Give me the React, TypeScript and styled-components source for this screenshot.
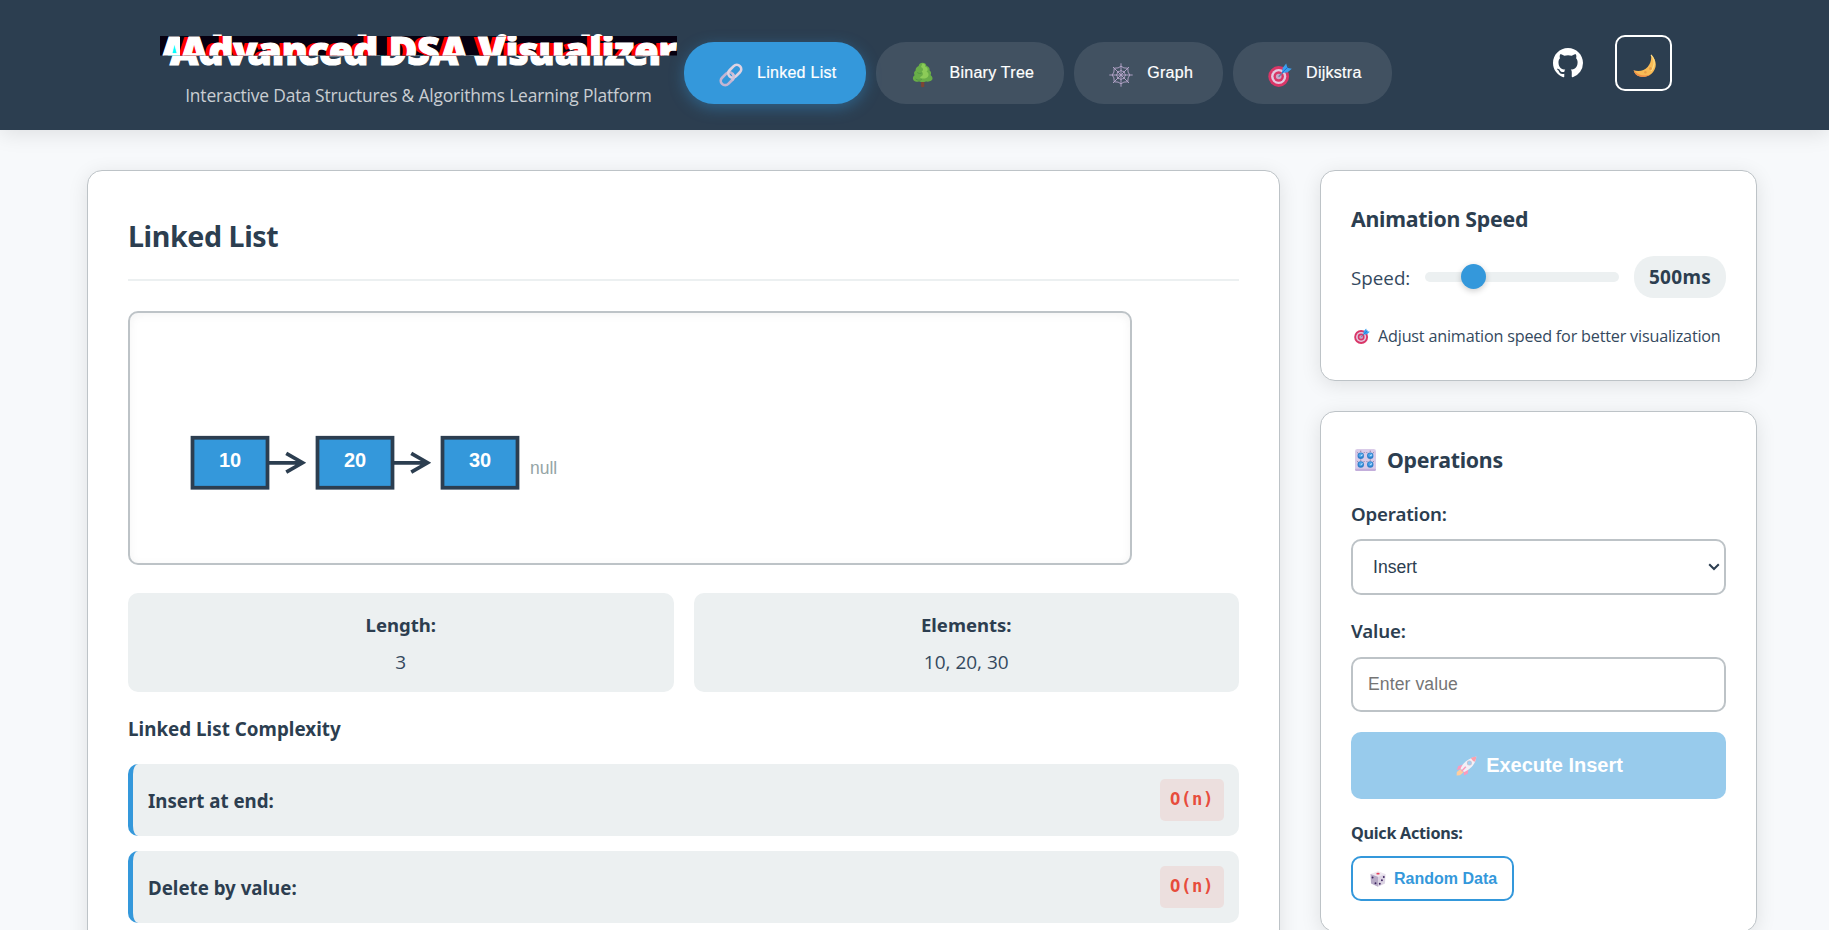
import React, { useState } from 'react';
import styled, { createGlobalStyle, css } from 'styled-components';

const INK = '#2c3e50';
const TEXT = '#34495e';
const BLUE = '#3498db';
const LINE = '#bdc3c7';
const SOFT = '#ecf0f1';
const UI = "'Noto Sans', 'Open Sans', sans-serif";
const LIGHT_UI = "'Open Sans', 'Noto Sans', sans-serif";
const CONTROL = "'Liberation Sans', Arial, sans-serif";

const GlobalStyle = createGlobalStyle`
  *, *::before, *::after { box-sizing: border-box; }
  body {
    margin: 0;
    overflow: hidden;
    background: #f7f9fb;
    color: ${INK};
    font-family: ${UI};
  }
  h1, h2, h3, h4, p { margin: 0; }
`;

const Page = styled.div`
  height: 100vh;
  min-width: 1829px;
  overflow: hidden;
`;

/* ---------- header ---------- */

const Header = styled.header`
  display: flex;
  align-items: flex-start;
  height: 130px;
  padding: 25px 157px 0 170px;
  background: ${INK};
  box-shadow: 0 4px 20px rgba(0, 0, 0, 0.1);
`;

const Brand = styled.div`
  width: 497px;
  text-align: center;
  white-space: nowrap;
`;

const glitchLayer = css`
  content: attr(data-text);
  position: absolute;
  top: 0;
  width: 100%;
  height: 100%;
  overflow: hidden;
  background: #060010;
  color: #fff;
  clip-path: inset(11px 0 19.6px 0);
`;

const GlitchTitle = styled.h1`
  position: relative;
  color: #fff;
  font-size: 39px;
  font-weight: 900;
  line-height: 50px;
  letter-spacing: 0.07px;
  -webkit-text-stroke: 1.2px #fff;
  &::before {
    ${glitchLayer}
    left: -10px;
    text-shadow: 5px 0 cyan;
  }
  &::after {
    ${glitchLayer}
    left: 10px;
    text-shadow: -5px 0 red;
  }
`;

const Tagline = styled.p`
  margin-top: 6px;
  color: rgba(255, 255, 255, 0.75);
  font-family: ${LIGHT_UI};
  font-size: 17.4px;
  line-height: 28px;
  letter-spacing: -0.17px;
`;

const Tabs = styled.nav`
  display: flex;
  gap: 10px;
  margin: 17px auto 0 17px;
`;

const Tab = styled.button<{ $active?: boolean }>`
  display: flex;
  align-items: center;
  height: 62px;
  padding: 0 30px 0 35px;
  border: 0;
  border-radius: 30px;
  background: ${(p) => (p.$active ? BLUE : 'rgba(255, 255, 255, 0.1)')};
  box-shadow: ${(p) => (p.$active ? '0 4px 15px rgba(52, 152, 219, 0.4)' : 'none')};
  color: #fff;
  font: 500 16px/24px ${CONTROL};
  letter-spacing: 0.27px;
  white-space: nowrap;
  svg { margin: 3px 14px 0 0; }
  span { -webkit-text-stroke: 0.2px #fff; }
`;

const HeaderActions = styled.div`
  display: flex;
  align-items: center;
  gap: 32px;
  margin-top: 10px;
`;

const ThemeButton = styled.button`
  display: flex;
  align-items: center;
  justify-content: center;
  width: 57px;
  height: 56px;
  padding: 6px 0 0 2px;
  border: 2px solid #fff;
  border-radius: 10px;
  background: transparent;
`;

/* ---------- page body ---------- */

const Columns = styled.main`
  display: grid;
  grid-template-columns: 1193px 437px;
  gap: 40px;
  padding: 40px 0 0 87px;
`;

const Card = styled.section`
  border: 1px solid ${LINE};
  border-radius: 15px;
  background: #fff;
  box-shadow: 0 4px 20px rgba(0, 0, 0, 0.1);
`;

const MainCard = styled(Card)`
  min-height: 1200px;
  padding: 40px;
`;

const CardTitle = styled.h2`
  padding-bottom: 19px;
  border-bottom: 2px solid ${SOFT};
  font-size: 28.6px;
  line-height: 49px;
  letter-spacing: -0.4px;
`;

const Canvas = styled.div`
  width: 1004px;
  height: 254px;
  margin-top: 30px;
  border: 2px solid ${LINE};
  border-radius: 10px;
  box-shadow: inset 0 2px 10px rgba(0, 0, 0, 0.05);
  svg { display: block; }
`;

const Stats = styled.div`
  display: grid;
  grid-template-columns: 1fr 1fr;
  gap: 20px;
  margin-top: 28px;
`;

const Stat = styled.div`
  display: flex;
  flex-direction: column;
  gap: 7px;
  align-items: center;
  height: 99px;
  padding-top: 17px;
  border-radius: 10px;
  background: ${SOFT};
  color: ${TEXT};
  font-family: ${LIGHT_UI};
  font-size: 19px;
  line-height: 30px;
  strong {
    color: ${INK};
    font-family: ${UI};
    font-size: 18.5px;
    font-weight: 700;
  }
`;

const SectionTitle = styled.h4`
  margin: 22px 0 20px;
  font-size: 18.8px;
  line-height: 30px;
  letter-spacing: 0.02px;
`;

const Rows = styled.div`
  display: flex;
  flex-direction: column;
  gap: 15px;
`;

const Row = styled.div`
  display: flex;
  justify-content: space-between;
  align-items: center;
  height: 72px;
  padding: 0 15px;
  border-left: 5px solid ${BLUE};
  border-radius: 10px;
  background: ${SOFT};
`;

const RowLabel = styled.span`
  padding-top: 1px;
  font-size: 18.7px;
  font-weight: 700;
`;

const Cost = styled.code`
  width: 64px;
  height: 42px;
  border-radius: 5px;
  background: rgba(231, 76, 60, 0.1);
  color: #e74c3c;
  font: 700 17.2px/41px 'DejaVu Sans Mono', monospace;
  letter-spacing: 0.6px;
  text-align: center;
`;

/* ---------- side column ---------- */

const Side = styled.aside`
  display: flex;
  flex-direction: column;
  gap: 30px;
`;

const SideCard = styled(Card)`
  padding: 30px;
`;

const SideTitle = styled.h3`
  display: flex;
  align-items: center;
  gap: 11px;
  font-size: 21.3px;
  line-height: 36px;
  letter-spacing: -0.24px;
  svg { margin: 0 0 0 4px; }
`;

const SpeedRow = styled.div`
  display: flex;
  align-items: center;
  gap: 15px;
  height: 42px;
  margin-top: 19px;
`;

const SpeedLabel = styled.span`
  width: 59px;
  padding-top: 1px;
  color: ${TEXT};
  font-family: ${LIGHT_UI};
  font-size: 18.8px;
`;

const Slider = styled.div`
  flex: 1;
  height: 10px;
  border-radius: 5px;
  background: ${SOFT};
`;

const Thumb = styled.div`
  width: 25px;
  height: 25px;
  margin: -8px 0 0 36px;
  border-radius: 50%;
  background: ${BLUE};
  box-shadow: 0 2px 6px rgba(0, 0, 0, 0.2);
`;

const SpeedValue = styled.span`
  width: 92px;
  border-radius: 20px;
  background: ${SOFT};
  font-size: 19px;
  font-weight: 700;
  line-height: 43px;
  height: 42px;
  letter-spacing: 0.3px;
  text-align: center;
`;

const Tip = styled.p`
  display: flex;
  align-items: center;
  gap: 8px;
  margin-top: 24px;
  padding-left: 3px;
  color: ${TEXT};
  font-family: ${LIGHT_UI};
  font-size: 16.2px;
  line-height: 28px;
  letter-spacing: -0.2px;
  white-space: nowrap;
`;

const FieldLabel = styled.label`
  display: block;
  margin-top: 21px;
  font-size: 18.7px;
  font-weight: 600;
  line-height: 30px;
  letter-spacing: -0.17px;
`;

const SelectBox = styled.div`
  display: flex;
  align-items: center;
  justify-content: space-between;
  height: 56px;
  margin-top: 10px;
  padding: 0 4px 0 20px;
  border: 2px solid ${LINE};
  border-radius: 10px;
  font: 17.6px ${CONTROL};
`;

const Input = styled.input`
  display: block;
  width: 100%;
  height: 55px;
  margin-top: 11px;
  padding: 0 15px 1px;
  border: 2px solid ${LINE};
  border-radius: 10px;
  background: #fff;
  font: 17.6px ${CONTROL};
  letter-spacing: 0.08px;
  &::placeholder { color: #757575; }
`;

const ExecuteButton = styled.button`
  display: flex;
  align-items: center;
  justify-content: center;
  gap: 9px;
  width: 100%;
  height: 67px;
  margin-top: 20px;
  padding: 0 0 0 2px;
  border: 0;
  border-radius: 10px;
  background: ${BLUE};
  opacity: 0.5;
  color: #fff;
  font: 700 20px ${CONTROL};
`;

const QuickTitle = styled.h4`
  margin-top: 20px;
  font-size: 16.2px;
  line-height: 28px;
  letter-spacing: -0.28px;
`;

const QuickButton = styled.button`
  display: flex;
  align-items: center;
  gap: 8px;
  height: 45px;
  margin-top: 9px;
  padding: 0 15px 0 17px;
  border: 2px solid ${BLUE};
  border-radius: 10px;
  background: transparent;
  color: ${BLUE};
  font: 700 16px ${CONTROL};
`;

/* ---------- pictograms ---------- */

const LinkIcon = () => (
  <svg width="24" height="24" viewBox="0 0 24 24" fill="none">
    <g transform="rotate(-45 12 12)" strokeWidth="2.7">
      <rect x="-0.6" y="7.6" width="14.6" height="8.8" rx="4.4" stroke="#c4b5d2" />
      <rect x="10" y="7.6" width="14.6" height="8.8" rx="4.4" stroke="#ddd2e2" />
      <path d="M9 16.4h.6a4.4 4.4 0 0 0 4.4-4.4" stroke="#cfc2da" />
    </g>
  </svg>
);

const TreeIcon = () => (
  <svg width="24" height="26" viewBox="0 0 24 26">
    <path d="M10.100 18h3.200v6.800q-1.600.8-3.200 0z" fill="#7d4533" />
    <path
      d="M11.500.8c2.200 0 3.800 1.300 3.800 3 2.200.6 3.700 2.200 3.300 4.600 1.700 1 1.900 3 1 4.500 2.300 1.800 2.600 4.200.8 5.700-1.300 1.200-4 1.200-5.500.9-2 .8-4.600.8-6.400 0-2 .4-4.800.1-5.800-1.100-1.400-1.700-.9-4 .9-5.200-1-1.800-.6-3.700 1-4.700C4.400 6.300 5.800 4.500 7.700 3.900 7.700 2.200 9.300.8 11.500.8z"
      fill="#69ad48"
    />
    <path d="M11.500 1.500c2 0 3.200 1.400 2.600 3.200 3 .6 3.300 3.600 1.400 5 3 1.300 2.600 5-.3 6.300-2 .9-5 .6-6.500-.8 3.500-1 4-3.600 2-5.600 2-1.500 1.800-3.700-.7-4.700z" fill="#8ccb58" />
    <path d="M4.500 16.900c2 1.600 4.500 1.600 6.300.6M6.300 10.500c1.300 1.200 3 1.200 4.300.5" stroke="#4f9444" strokeWidth="0.900" fill="none" />
  </svg>
);

const WebIcon = () => (
  <svg width="24" height="24" viewBox="0 0 24 24" fill="none" stroke="#b3a3c8" strokeWidth="0.95">
    <path d="M12 .3v23.400M.3 12h23.400M4 4l16 16M20 4 4 20" />
    <path d="M12 3.200Q14.400 5.600 18.800 5.200 18.400 9.600 20.800 12 18.400 14.400 18.800 18.800 14.400 18.400 12 20.800 9.600 18.400 5.200 18.800 5.600 14.400 3.200 12 5.600 9.600 5.200 5.200 9.600 5.600 12 3.200z" />
    <path d="M12 7.400Q13.200 8.700 15.500 8.500 15.300 10.800 16.600 12 15.300 13.200 15.500 15.500 13.200 15.300 12 16.600 10.800 15.300 8.500 15.500 8.700 13.200 7.400 12 8.700 10.800 8.500 8.500 10.800 8.700 12 7.400z" />
  </svg>
);

const TargetIcon = ({ size = 24 }: { size?: number }) => (
  <svg width={size} height={size} viewBox="0 0 24 24">
    <circle cx="10.700" cy="13.500" r="10.400" fill="#d93667" />
    <circle cx="10.700" cy="13.500" r="7.600" fill="#e2c9e0" />
    <circle cx="10.700" cy="13.500" r="5.200" fill="#d93667" />
    <circle cx="10.700" cy="13.500" r="2.800" fill="#c9a9c8" />
    <path d="M10.600 13.700 17 7.200" stroke="#6b7fa8" strokeWidth="1.300" />
    <path d="M14 9.800 14.600 5 18.200.6 19.100 3.800 20.300 4.900 23.800 5.800 19.300 9.400z" fill="#3aa0f0" />
    <path d="M14 9.800 20.300 3.700" stroke="#1b6fd0" strokeWidth="1" />
  </svg>
);

const OctocatIcon = () => (
  <svg width="30" height="30" viewBox="0 0 16 16" fill="#fff">
    <path d="M8 0C3.580 0 0 3.580 0 8c0 3.540 2.290 6.530 5.470 7.590.4.070.55-.170.55-.380 0-.190-.010-.820-.010-1.490-2.010.370-2.530-.490-2.690-.940-.090-.230-.480-.940-.820-1.130-.280-.150-.680-.520-.010-.530.630-.010 1.080.580 1.230.820.720 1.210 1.870.870 2.330.660.070-.520.280-.870.510-1.070-1.780-.200-3.640-.890-3.640-3.950 0-.870.310-1.590.820-2.150-.080-.200-.360-1.020.080-2.120 0 0 .670-.210 2.200.820.640-.180 1.320-.270 2-.270s1.360.090 2 .270c1.530-1.040 2.200-.820 2.200-.820.440 1.100.160 1.920.080 2.120.510.560.820 1.270.820 2.150 0 3.070-1.870 3.750-3.650 3.950.290.250.540.730.540 1.480 0 1.070-.010 1.930-.010 2.200 0 .210.150.460.550.380A8.010 8.010 0 0 0 16 8c0-4.420-3.580-8-8-8z" />
  </svg>
);

const MoonIcon = () => (
  <svg width="24" height="24" viewBox="0 0 24 24">
    <path d="M18 .9c4.400 3.600 6.200 9.400 3.600 14.700-3 6.200-9.400 8.600-15.500 6.700C3.600 21.500 1.500 19.300.6 16.200c5.200 1.700 10.600.6 14-3.300 3-3.500 4.100-7.600 3.400-12z" fill="#f9bb55" />
    <path d="M.6 16.200c.9 3.100 3 5.300 5.500 6.100 4 1.200 8.200.6 11.400-1.700C11 22.600 4.500 21.200.6 16.200z" fill="#ef8d49" />
    <path d="M18 .9c2.800 3 4 7.200 2.600 11.400-.6 1.900-1.500 3.300-2.600 4.500" stroke="#ffdc83" strokeWidth="1.300" fill="none" />
    <circle cx="17.500" cy="14.500" r="1.500" fill="#e89e48" />
    <circle cx="12.400" cy="18.300" r="1.200" fill="#e89e48" />
  </svg>
);

const knobs = [[6.300, 7.300], [16.700, 7.300], [6.300, 17], [16.700, 17]];

const KnobsIcon = () => (
  <svg width="21" height="22" viewBox="0 0 23 24">
    <rect width="23" height="24" rx="2.600" fill="#d9cbe8" />
    <rect y="21.500" width="23" height="2.500" rx="1.200" fill="#c3aedb" />
    {knobs.map(([x, y]) => (
      <g key={`${x}-${y}`}>
        <path d={`M${x} ${y - 5.600}v1.500M${x - 4.200} ${y - 3.900}l1 1M${x + 4.200} ${y - 3.900}l-1 1`} stroke="#7d6d92" strokeWidth="0.900" />
        <circle cx={x} cy={y} r="3.500" fill="#2f7fc9" />
        <circle cx={x} cy={y - 0.500} r="2.300" fill="#4ea6ea" />
        <path d={`M${x} ${y}l2-1`} stroke="#e8f4ff" strokeWidth="1" />
      </g>
    ))}
  </svg>
);

const RocketIcon = () => (
  <svg width="21" height="20" viewBox="0 0 21 20">
    <path d="M4.500 13 7.500 16.200 4 19.200.6 19.600.8 16z" fill="#ff9d3c" />
    <path d="M7 8.500 2.300 9.900.8 14l4.400-1zM12.300 13.300l-.5 4.300L8 19.600l-.5-4z" fill="#f6397d" />
    <path d="M4.600 12.400C7 7 12 2 20.300.4 20 7.500 14.500 13.600 8 16z" fill="#e9e1ee" />
    <path d="M14.800 1.900Q17.400.8 20.300.4 20.200 3.200 19 5.800 16.400 5 14.800 1.900z" fill="#f6455f" />
    <circle cx="13.400" cy="6.900" r="2.500" fill="#8f86a8" />
    <circle cx="13.400" cy="6.900" r="1.600" fill="#41a5ee" />
    <path d="m5.600 15.300 4.200-4.500" stroke="#f6397d" strokeWidth="1.500" />
  </svg>
);

const DieIcon = () => (
  <svg width="16" height="16" viewBox="0 0 16 16">
    <path d="M8 .2 15.500 3 8 5.800.5 3z" fill="#eee8f0" />
    <path d="M.5 3 8 5.800v10L1 12.600z" fill="#b7aac6" />
    <path d="M15.500 3 8 5.800v10l7-3.200z" fill="#dcd3e3" />
    <ellipse cx="8" cy="2.700" rx="1.700" ry="0.900" fill="#e8405c" />
    <g fill="#3d2560">
      <circle cx="2.600" cy="6.500" r="0.950" />
      <circle cx="5.500" cy="12.300" r="0.950" />
      <circle cx="13.800" cy="6" r="0.950" />
      <circle cx="11.900" cy="9.300" r="0.950" />
      <circle cx="9.800" cy="12.700" r="0.950" />
    </g>
  </svg>
);

const ChevronIcon = () => (
  <svg width="12" height="8" viewBox="0 0 12 8" fill="none" stroke={INK} strokeWidth="2">
    <path d="m1.200 1.200 4.800 4.800 4.800-4.800" />
  </svg>
);

/* ---------- list drawing ---------- */

const values = [10, 20, 30];

const ListDrawing = () => (
  <svg width="1000" height="250" viewBox="0 0 800 200" fontFamily={CONTROL}>
    {values.map((value, i) => {
      const x = 50 + i * 100;
      return (
        <g key={value}>
          <rect x={x} y="99.800" width="60" height="40" fill={BLUE} stroke={INK} strokeWidth="3" />
          <text x={x + 30} y="123.500" fill="#fff" fontSize="16" fontWeight="700" textAnchor="middle">{value}</text>
          {i < values.length - 1 && (
            <path d={`M${x + 60} 119.800h28M${x + 75} 112.300l13 7.500-13 7.500`} fill="none" stroke={INK} strokeWidth="3" />
          )}
        </g>
      );
    })}
    <text x="320" y="128.800" fill="#95a5a6" fontSize="14">null</text>
  </svg>
);

const tabs = [
  { name: 'Linked List', Icon: LinkIcon },
  { name: 'Binary Tree', Icon: TreeIcon },
  { name: 'Graph', Icon: WebIcon },
  { name: 'Dijkstra', Icon: TargetIcon },
];

const costs = [
  ['Insert at end:', 'O(n)'],
  ['Delete by value:', 'O(n)'],
];

export default function App() {
  const [active, setActive] = useState('Linked List');
  return (
    <Page>
      <GlobalStyle />
      <Header>
        <Brand>
          <GlitchTitle data-text="Advanced DSA Visualizer">Advanced DSA Visualizer</GlitchTitle>
          <Tagline>Interactive Data Structures &amp; Algorithms Learning Platform</Tagline>
        </Brand>
        <Tabs>
          {tabs.map(({ name, Icon }) => (
            <Tab key={name} $active={name === active} onClick={() => setActive(name)}>
              <Icon />
              <span>{name}</span>
            </Tab>
          ))}
        </Tabs>
        <HeaderActions>
          <OctocatIcon />
          <ThemeButton aria-label="Toggle theme"><MoonIcon /></ThemeButton>
        </HeaderActions>
      </Header>
      <Columns>
        <MainCard>
          <CardTitle>Linked List</CardTitle>
          <Canvas><ListDrawing /></Canvas>
          <Stats>
            <Stat><strong>Length:</strong><span>{values.length}</span></Stat>
            <Stat><strong>Elements:</strong><span>{values.join(', ')}</span></Stat>
          </Stats>
          <SectionTitle>Linked List Complexity</SectionTitle>
          <Rows>
            {costs.map(([label, cost]) => (
              <Row key={label}><RowLabel>{label}</RowLabel><Cost>{cost}</Cost></Row>
            ))}
          </Rows>
        </MainCard>
        <Side>
          <SideCard>
            <SideTitle>Animation Speed</SideTitle>
            <SpeedRow>
              <SpeedLabel>Speed:</SpeedLabel>
              <Slider><Thumb /></Slider>
              <SpeedValue>500ms</SpeedValue>
            </SpeedRow>
            <Tip><TargetIcon size={16} /><span>Adjust animation speed for better visualization</span></Tip>
          </SideCard>
          <SideCard>
            <SideTitle><KnobsIcon /><span>Operations</span></SideTitle>
            <FieldLabel>Operation:</FieldLabel>
            <SelectBox><span>Insert</span><ChevronIcon /></SelectBox>
            <FieldLabel>Value:</FieldLabel>
            <Input placeholder="Enter value" />
            <ExecuteButton><RocketIcon /><span>Execute Insert</span></ExecuteButton>
            <QuickTitle>Quick Actions:</QuickTitle>
            <QuickButton><DieIcon /><span>Random Data</span></QuickButton>
          </SideCard>
        </Side>
      </Columns>
    </Page>
  );
}
